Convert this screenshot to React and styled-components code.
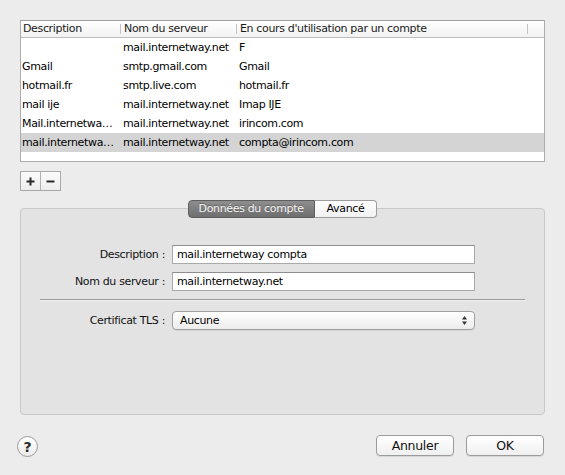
import React from "react";
import styled, { createGlobalStyle } from "styled-components";

const GlobalStyle = createGlobalStyle`
  html, body {
    margin: 0;
    padding: 0;
    background: #ececec;
  }
  body {
    font-family: "DejaVu Sans", Verdana, sans-serif;
    font-size: 11px;
    letter-spacing: -0.35px;
    color: #000;
  }
`;

// les descriptions longues sont déjà tronquées comme dans la liste
const comptes = [
  { desc: "", serveur: "mail.internetway.net", compte: "F" },
  { desc: "Gmail", serveur: "smtp.gmail.com", compte: "Gmail" },
  { desc: "hotmail.fr", serveur: "smtp.live.com", compte: "hotmail.fr" },
  { desc: "mail ije", serveur: "mail.internetway.net", compte: "Imap IJE" },
  {
    desc: "Mail.internetwa…",
    serveur: "mail.internetway.net",
    compte: "irincom.com",
  },
  {
    desc: "mail.internetwa…",
    serveur: "mail.internetway.net",
    compte: "compta@irincom.com",
    selected: true,
  },
];

export default function App() {
  const [onglet, setOnglet] = React.useState("compte");

  return (
    <>
      <GlobalStyle />
      <Window>
        <TableBox>
          <HeaderRow>
            <HeadCell>Description</HeadCell>
            <HeadCell sep>Nom du serveur</HeadCell>
            <HeadCell sep>En cours d'utilisation par un compte</HeadCell>
            <HeadCell sep />
          </HeaderRow>
          {comptes.map((c, i) => (
            <Row key={i} selected={c.selected}>
              <Cell first>{c.desc}</Cell>
              <Cell>{c.serveur}</Cell>
              <Cell>{c.compte}</Cell>
              <Cell />
            </Row>
          ))}
        </TableBox>

        <PlusMinus>
          <SmallButton>
            <svg width="9" height="9" viewBox="0 0 9 9">
              <path d="M4.5 0.5v8M0.5 4.5h8" stroke="#2a2a2a" strokeWidth="2" />
            </svg>
          </SmallButton>
          <SmallButton>
            <svg width="9" height="9" viewBox="0 0 9 9">
              <path d="M0.5 4.5h8" stroke="#2a2a2a" strokeWidth="2" />
            </svg>
          </SmallButton>
        </PlusMinus>

        <TabBar>
          <Tab
            active={onglet === "compte"}
            first
            onClick={() => setOnglet("compte")}
          >
            Données du compte
          </Tab>
          <Tab active={onglet === "avance"} onClick={() => setOnglet("avance")}>
            Avancé
          </Tab>
        </TabBar>

        <GroupBox>
          <FieldRow>
            <Label>Description :</Label>
            <TextInput defaultValue="mail.internetway compta" />
          </FieldRow>
          <FieldRow>
            <Label>Nom du serveur :</Label>
            <TextInput defaultValue="mail.internetway.net" />
          </FieldRow>
          <Separator />
          <FieldRow>
            <Label>Certificat TLS :</Label>
            <Select>
              <span>Aucune</span>
              <svg width="7" height="11" viewBox="0 0 7 11">
                <path d="M3.5 1L6 4.5H1z" fill="#333" />
                <path d="M3.5 10L6 6.5H1z" fill="#333" />
              </svg>
            </Select>
          </FieldRow>
        </GroupBox>

        <Footer>
          <HelpButton>?</HelpButton>
          <Buttons>
            <PushButton>Annuler</PushButton>
            <PushButton>OK</PushButton>
          </Buttons>
        </Footer>
      </Window>
    </>
  );
}

const Window = styled.div`
  width: 565px;
  height: 475px;
  box-sizing: border-box;
  padding: 20px 20px 0 20px;
  display: flex;
  flex-direction: column;
`;

const TableBox = styled.div`
  height: 142px;
  box-sizing: border-box;
  background: #fff;
  border: 1px solid #acacac;
  border-top-color: #a0a0a0;
`;

const grid = `
  display: grid;
  grid-template-columns: 99px 116px 291px 1fr;
`;

const HeaderRow = styled.div`
  ${grid}
  height: 16px;
  background: linear-gradient(#ffffff, #f2f2f2);
  border-bottom: 1px solid #bcbcbc;
`;

const HeadCell = styled.div`
  position: relative;
  line-height: 16px;
  padding-left: ${(p) => (p.sep ? "4px" : "2px")};
  color: #1a1a1a;
  white-space: nowrap;
  overflow: hidden;

  &::before {
    content: "";
    display: ${(p) => (p.sep ? "block" : "none")};
    position: absolute;
    left: 0;
    top: 3px;
    height: 10px;
    width: 1px;
    background: #c4c4c4;
  }
`;

const Row = styled.div`
  ${grid}
  height: 19px;
  background: ${(p) => (p.selected ? "#d4d4d4" : "transparent")};
`;

const Cell = styled.div`
  line-height: 19px;
  padding-left: ${(p) => (p.first ? "1px" : "3px")};
  white-space: nowrap;
`;

const PlusMinus = styled.div`
  display: flex;
  margin-top: 9px;
  width: 41px;
  height: 20px;
  box-sizing: border-box;
  border: 1px solid #a8a8a8;
  background: linear-gradient(#fbfbfb, #ededed);
`;

const SmallButton = styled.div`
  flex: 1;
  display: flex;
  align-items: center;
  justify-content: center;

  & + & {
    border-left: 1px solid #b2b2b2;
  }
`;

const TabBar = styled.div`
  position: relative;
  z-index: 1;
  display: flex;
  justify-content: center;
  margin-top: 9px;
  height: 18px;
`;

const Tab = styled.div`
  height: 18px;
  box-sizing: border-box;
  line-height: 16px;
  padding: 0 ${(p) => (p.first ? "10px" : "12px")};
  border: 1px solid ${(p) => (p.active ? "#5e5e5e" : "#9d9d9d")};
  border-left: ${(p) => (p.first ? "" : "none")};
  border-radius: ${(p) => (p.first ? "4px 0 0 4px" : "0 4px 4px 0")};
  background: ${(p) =>
    p.active
      ? "linear-gradient(#8e8e8e, #6e6e6e)"
      : "linear-gradient(#ffffff, #f1f1f1)"};
  color: ${(p) => (p.active ? "#f6f6f6" : "#000")};
  text-shadow: ${(p) => (p.active ? "0 -1px 0 rgba(0,0,0,0.3)" : "none")};
  cursor: default;
`;

const GroupBox = styled.div`
  margin-top: -10px;
  height: 207px;
  box-sizing: border-box;
  padding-top: 36px;
  background: #e3e3e3;
  border: 1px solid #c8c8c8;
  border-radius: 4px;
  display: flex;
  flex-direction: column;
  gap: 8px;
`;

const FieldRow = styled.div`
  display: grid;
  grid-template-columns: 144px 303px;
  column-gap: 7px;
  align-items: center;
`;

const Label = styled.div`
  text-align: right;
  color: #111;
`;

const TextInput = styled.input`
  height: 19px;
  box-sizing: border-box;
  margin: 0;
  padding: 0 4px;
  border: 1px solid #a9a9a9;
  border-top-color: #8e8e8e;
  background: #fff;
  font: inherit;
  letter-spacing: inherit;
  color: #000;
  outline: none;
`;

const Separator = styled.div`
  height: 1px;
  margin: 0 19px 3px;
  background: #9c9c9c;
  box-shadow: 0 1px 0 #f0f0f0;
`;

const Select = styled.div`
  height: 19px;
  box-sizing: border-box;
  display: flex;
  align-items: center;
  justify-content: space-between;
  padding: 0 6px 0 7px;
  border: 1px solid #9f9f9f;
  border-radius: 4px;
  background: linear-gradient(#ffffff, #ececec);
  box-shadow: 0 1px 0 rgba(0, 0, 0, 0.05);
`;

const Footer = styled.div`
  display: flex;
  justify-content: space-between;
  align-items: flex-start;
  margin-top: 20px;
  margin-left: -3px;
  margin-right: 1px;
`;

const HelpButton = styled.div`
  margin-top: 1px;
  width: 21px;
  height: 21px;
  box-sizing: border-box;
  border-radius: 50%;
  border: 1px solid #9a9a9a;
  background: linear-gradient(#ffffff, #ececec);
  display: flex;
  align-items: center;
  justify-content: center;
  font-size: 14px;
  font-weight: bold;
  color: #2b2b2b;
  letter-spacing: 0;
`;

const Buttons = styled.div`
  display: flex;
  gap: 12px;
`;

const PushButton = styled.div`
  width: 78px;
  height: 21px;
  box-sizing: border-box;
  border: 1px solid #9b9b9b;
  border-radius: 4px;
  background: linear-gradient(#ffffff, #f0f0f0);
  box-shadow: 0 1px 0 rgba(0, 0, 0, 0.08);
  display: flex;
  align-items: center;
  justify-content: center;
  font-size: 12.5px;
  letter-spacing: -0.3px;
  color: #111;
  cursor: default;
`;
